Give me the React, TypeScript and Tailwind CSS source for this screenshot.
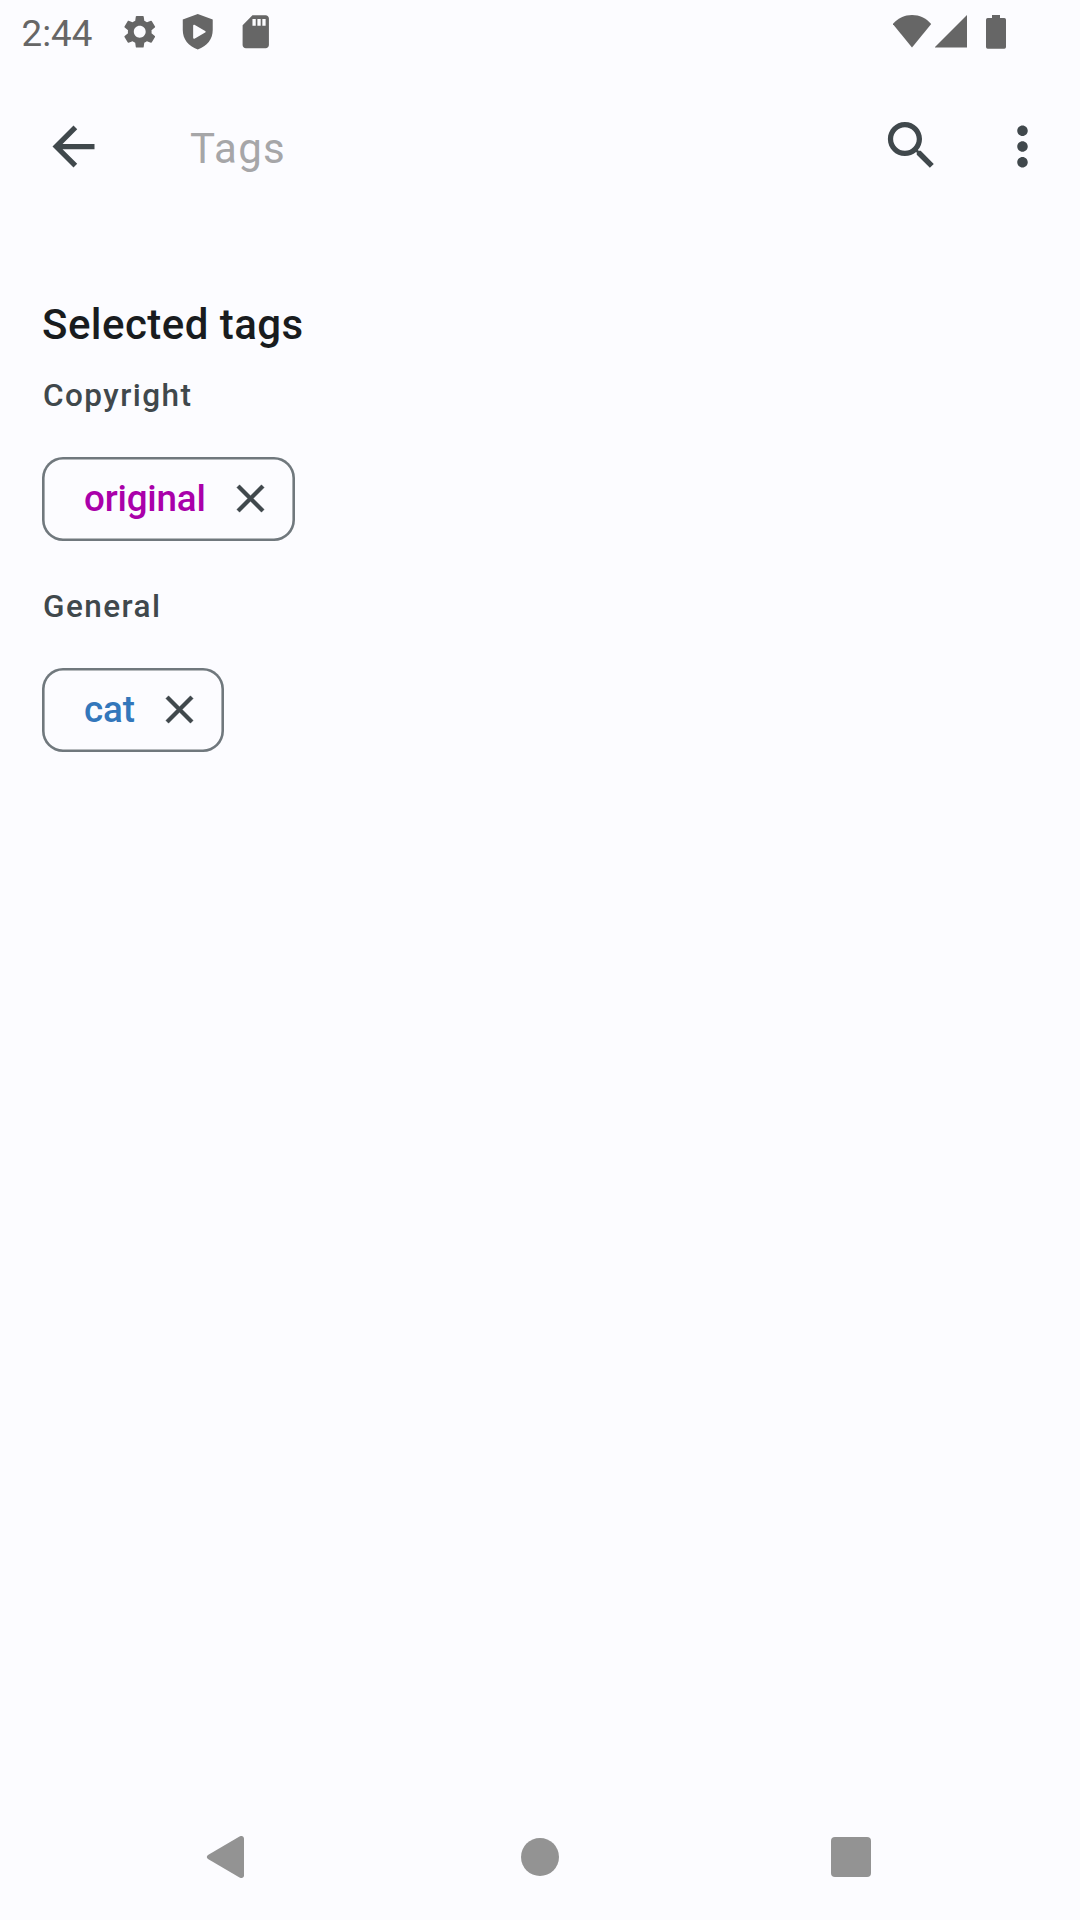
import type { ReactNode } from "react";

function StatusBar() {
  return (
    <header className="flex h-[63px] items-center justify-between pr-[73px] pl-[21.5px] text-[#666666]">
      <div className="flex items-center">
        <span className="w-[98px] pt-[4px] text-[36.75px] leading-[42px]">2:44</span>
        <div className="flex items-center gap-[18.5px]">
          <svg className="size-[39.5px]" viewBox="0 0 24 24" fill="currentColor">
            <path d="M19.14 12.94c.04-.3.06-.61.06-.94 0-.32-.02-.64-.07-.94l2.03-1.58a.49.49 0 0 0 .12-.61l-1.92-3.32a.488.488 0 0 0-.59-.22l-2.39.96c-.5-.38-1.03-.7-1.62-.94l-.36-2.54a.484.484 0 0 0-.48-.41h-3.84c-.24 0-.43.17-.47.41l-.36 2.54c-.59.24-1.13.57-1.62.94l-2.39-.96c-.22-.08-.47 0-.59.22L2.74 8.87c-.12.21-.08.47.12.61l2.03 1.58c-.05.3-.09.63-.09.94s.02.64.07.94l-2.03 1.58a.49.49 0 0 0-.12.61l1.92 3.32c.12.22.37.29.59.22l2.39-.96c.5.38 1.03.7 1.62.94l.36 2.54c.05.24.24.41.48.41h3.84c.24 0 .44-.17.47-.41l.36-2.54c.59-.24 1.13-.56 1.62-.94l2.39.96c.22.08.47 0 .59-.22l1.92-3.32c.12-.22.07-.47-.12-.61l-2.01-1.58zM12 15.6c-1.98 0-3.6-1.62-3.6-3.6s1.62-3.6 3.6-3.6 3.6 1.62 3.6 3.6-1.62 3.6-3.6 3.6z" />
          </svg>
          <svg className="size-[39.5px]" viewBox="0 0 24 24" fill="currentColor">
            <path fillRule="evenodd" d="M12 1.2 2.9 4.6V11c0 5.6 3.4 9.8 9.1 11.8 5.7-2 9.1-6.2 9.1-11.8V4.6L12 1.2ZM9.2 8.3v7.4c0 .5.4.7.8.5l6.5-3.7c.4-.2.4-.7 0-.9L10 7.8c-.4-.2-.8 0-.8.5Z" />
          </svg>
          <svg className="size-[39.5px]" viewBox="0 0 24 24" fill="currentColor">
            <path d="M18 2h-8L4.02 8 4 20c0 1.1.9 2 2 2h12c1.1 0 2-.9 2-2V4c0-1.1-.9-2-2-2zm-6 6.400h-2V4.200h2v4.200zm3 0h-2V4.200h2v4.200zm3 0h-2V4.200h2v4.200z" />
          </svg>
        </div>
      </div>
      <div className="flex items-start">
        <svg className="h-[34px] w-[39px]" viewBox="0 0 39 34" fill="currentColor">
          <path d="M19 32.500-.2 9C5 3 11.500 0 19 0S33 3 38.200 9Z" />
        </svg>
        <svg className="ml-[3px] h-[34px] w-[33px]" viewBox="0 0 33 34" fill="currentColor">
          <path d="M32 0V32.500H-.5Z" />
        </svg>
        <svg className="ml-[18px] h-[34px] w-5" viewBox="0 0 20 34" fill="currentColor">
          <path d="M6 0h8v3h4.300A1.700 1.700 0 0 1 20 4.700v27.300a1.700 1.700 0 0 1-1.700 1.700H1.700A1.700 1.700 0 0 1 0 32V4.700a1.700 1.700 0 0 1 1.700-1.700H6Z" />
        </svg>
        <span className="w-px" />
      </div>
    </header>
  );
}

function IconButton({ label, children }: { label: string; children: ReactNode }) {
  return (
    <button aria-label={label} className="block size-[63px]">
      <svg className="size-[63px]" viewBox="0 0 24 24" fill="currentColor">
        {children}
      </svg>
    </button>
  );
}

function SearchBar() {
  return (
    <div className="flex h-[166px] items-center pr-[26px] pl-[42px] text-[#40484c]">
      <IconButton label="Back">
        <path d="M20 11H7.830l5.590-5.590L12 4l-8 8 8 8 1.410-1.410L7.830 13H20v-2z" />
      </IconButton>
      <span className="ml-[85px] flex-1 pt-[6px] text-[42px] leading-[50px] tracking-[1.3px] text-[#a6a6a8]">Tags</span>
      <div className="flex items-center gap-12">
        <div className="mb-[2px]">
          <IconButton label="Search">
            <path d="M15.500 14h-.79l-.28-.27C15.410 12.590 16 11.110 16 9.500 16 5.910 13.090 3 9.500 3S3 5.910 3 9.500 5.910 16 9.500 16c1.610 0 3.090-.59 4.230-1.570l.27.28v.79l5 4.990L20.490 19l-4.990-5zm-6 0C7.010 14 5 11.990 5 9.500S7.010 5 9.500 5 14 7.010 14 9.500 11.990 14 9.500 14z" />
          </IconButton>
        </div>
        <IconButton label="More options">
          <path d="M12 8c1.100 0 2-.9 2-2s-.9-2-2-2-2 .9-2 2 .9 2 2 2zm0 2c-1.100 0-2 .9-2 2s.9 2 2 2 2-.9 2-2-.9-2-2-2zm0 6c-1.100 0-2 .9-2 2s.9 2 2 2 2-.9 2-2-.9-2-2-2z" />
        </IconButton>
      </div>
    </div>
  );
}

function TagGroup({ title, tag, color }: { title: string; tag: string; color: string }) {
  return (
    <section className="flex flex-col items-start">
      <h2 className="h-[42px] pl-px text-[31.5px] leading-[42px] font-medium tracking-[1.45px] text-[#40484c]">{title}</h2>
      <div className="mt-10 mb-[45px] flex h-[84px] items-center rounded-[21px] pr-[21px] pl-[42px] shadow-[inset_0_0_0_2.6px_#70787d]">
        <span className={`text-[36.75px] leading-[50px] font-medium tracking-[-0.17px] ${color}`}>{tag}</span>
        <button aria-label={`Remove ${tag}`} className="mb-px ml-[21px] size-[47px] text-[#40484c]">
          <svg className="size-[47px]" viewBox="0 0 24 24" fill="currentColor" stroke="currentColor" strokeWidth="0.2">
            <path d="M19 6.410 17.590 5 12 10.590 6.410 5 5 6.410 10.590 12 5 17.590 6.410 19 12 13.410 17.590 19 19 17.590 13.410 12z" />
          </svg>
        </button>
      </div>
    </section>
  );
}

function NavigationBar() {
  return (
    <nav className="flex h-[126px] items-center pl-[206px]">
      <svg className="h-[42px] w-[38px] text-[#939393]" viewBox="0 0 38 42" fill="currentColor">
        <path d="M2 19 33.500 .4C35.500-.7 38 .4 38 2.800V39.200c0 2.400-2.500 3.500-4.500 2.400L2 23C.4 22 .4 20 2 19Z" />
      </svg>
      <span className="ml-[277px] size-[38px] rounded-full bg-[#939393]" />
      <span className="ml-[272px] size-10 rounded-[4px] bg-[#939393]" />
    </nav>
  );
}

export default function App() {
  return (
    <div className="flex h-[1920px] w-[1080px] flex-col bg-[#fcfcff] font-['Roboto',sans-serif]">
      <StatusBar />
      <SearchBar />
      <main className="flex-1 px-[42px] pt-[64px]">
        <h1 className="mb-[19px] text-[42px] leading-[63px] font-medium tracking-[0.45px] text-[#191c1e]">Selected tags</h1>
        <TagGroup title="Copyright" tag="original" color="text-[#aa00aa]" />
        <TagGroup title="General" tag="cat" color="text-[#3377bb]" />
      </main>
      <NavigationBar />
    </div>
  );
}
